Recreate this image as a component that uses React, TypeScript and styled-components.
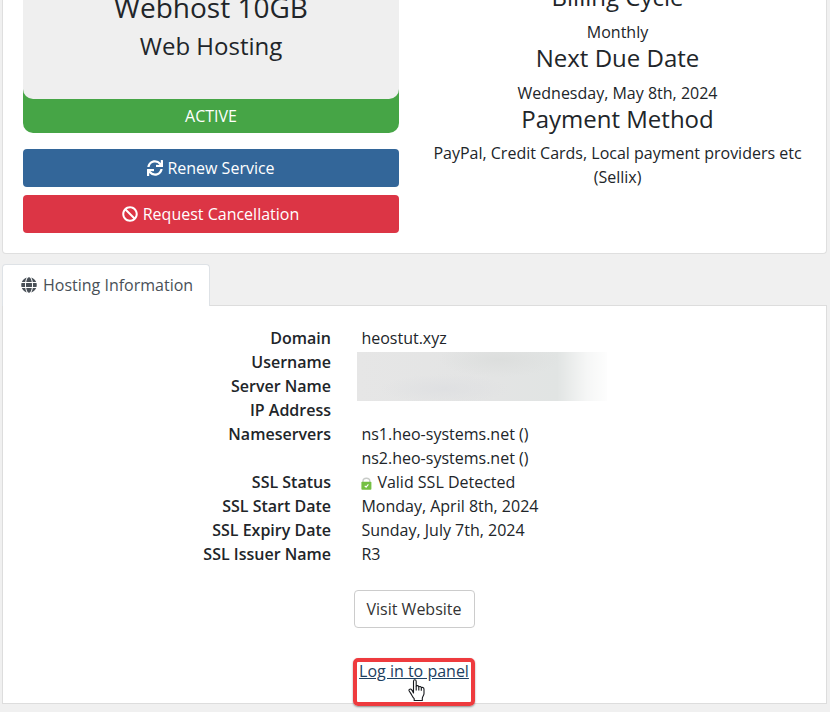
import React from "react";
import styled, { createGlobalStyle } from "styled-components";
import { FaBan, FaGlobe, FaSync } from "react-icons/fa";

const GlobalStyle = createGlobalStyle`
  *, *::before, *::after { box-sizing: border-box; }
  body {
    margin: 0;
    background: #f0f0f0;
    color: #212529;
    font-family: "Open Sans", Verdana, Tahoma, sans-serif;
    font-size: 16px;
    line-height: 24px;
  }
`;

const Page = styled.main`
  width: 830px;
  height: 712px;
  padding: 0 3px 0 2px;
  overflow: hidden;
`;

const SummaryCard = styled.section`
  display: grid;
  grid-template-columns: 376px 377px;
  column-gap: 30px;
  height: 254px;
  padding: 0 20px;
  background: #fff;
  border: 1px solid #dfdfdf;
  border-top: 0;
  border-radius: 0 0 4px 4px;
`;

const ProductColumn = styled.div`
  display: flex;
  flex-direction: column;
`;

const StatusBox = styled.div`
  height: 133px;
  margin-bottom: 16px;
  background: #46a546;
  border-radius: 0 0 10px 10px;
  color: #fff;
  text-align: center;
  text-transform: uppercase;
`;

const ProductBox = styled.div`
  display: flow-root;
  height: 99px;
  margin-bottom: 5px;
  background: #efefef;
  border-radius: 0 0 10px 10px;
  color: #212529;
  text-transform: none;
`;

const ProductName = styled.h3`
  margin: -9.4px 0 8px;
  font-size: 28px;
  font-weight: 400;
  line-height: 33.6px;
`;

const Heading = styled.h4`
  margin: 0 0 8px;
  font-size: 24px;
  font-weight: 400;
  line-height: 28.8px;
`;

const ActionButton = styled.button<{ $color: string }>`
  display: flex;
  align-items: center;
  justify-content: center;
  gap: 4.5px;
  height: 38px;
  margin: 0 0 8px;
  padding: 0 0.5px 0 0;
  border: 0;
  border-radius: 4px;
  background: ${(p) => p.$color};
  color: #fff;
  font: inherit;
`;

const BillingColumn = styled.div`
  margin-top: -17px;
  text-align: center;
`;

const TabBar = styled.nav`
  display: flex;
  margin-top: 10px;
  height: 41px;
`;

const Tab = styled.a`
  display: flex;
  align-items: center;
  gap: 6px;
  height: 42px;
  width: 208px;
  padding: 0 0 2px 18px;
  background: #fff;
  border: 1px solid #dee2e6;
  border-bottom: 0;
  border-radius: 4px 4px 0 0;
  color: #495057;
  z-index: 1;
`;

const Panel = styled.section`
  display: flex;
  flex-direction: column;
  align-items: center;
  height: 399px;
  padding-top: 20px;
  background: #fff;
  border: 1px solid #ddd;
`;

const Details = styled.dl`
  align-self: stretch;
  display: grid;
  grid-template-columns: 328px 1fr;
  grid-auto-rows: 24px;
  column-gap: 30.4px;
  margin: 0 0 24px;
`;

const Label = styled.dt<{ $row: number }>`
  grid-column: 1;
  grid-row: ${(p) => p.$row};
  font-weight: 600;
  text-align: right;
`;

const Value = styled.dd<{ $row: number }>`
  grid-column: 2;
  grid-row: ${(p) => p.$row};
  margin: 0;
`;

const Redacted = styled.dd`
  grid-column: 2;
  grid-row: 2 / span 2;
  width: 250px;
  height: 49px;
  margin: 2px 0 0 -4.4px;
  background:
    linear-gradient(90deg, #fff0 80%, #ffffffb0 92%, #fffffff0 100%),
    radial-gradient(ellipse at 57% 15%, #dcdedd, #dcdedd00 30%),
    radial-gradient(ellipse at 35% 75%, #dfe0e2, #dfe0e200 28%),
    linear-gradient(90deg, #e6e6e6, #e3e4e4 55%, #e1e4e3 80%);
`;

const LockIcon = styled.svg`
  margin-right: 5px;
  vertical-align: -2px;
`;

const VisitButton = styled.button`
  width: 121px;
  height: 38px;
  margin: 0 0 30px;
  padding: 0 1px 0 0;
  border: 1px solid #ccc;
  border-radius: 4px;
  background: #fff;
  color: #333;
  font: inherit;
`;

const LoginArea = styled.div`
  position: relative;
  display: flex;
  justify-content: center;
  width: 121px;
  padding: 1px 1px 0 0;
`;

const LoginLink = styled.a`
  color: #1d4061;
  text-decoration: underline;
`;

const Highlight = styled.span`
  position: absolute;
  top: 0;
  left: -1px;
  width: 122px;
  height: 48px;
  border: 4px solid #ee3b3e;
  border-radius: 5px;
  box-shadow: 0 1px 2px #0006;
`;

const Pointer = styled.svg`
  position: absolute;
  left: 54px;
  top: 21px;
`;

const details: [string, string][] = [
  ["Domain", "heostut.xyz"],
  ["Username", ""],
  ["Server Name", ""],
  ["IP Address", ""],
  ["Nameservers", "ns1.heo-systems.net ()"],
  ["", "ns2.heo-systems.net ()"],
  ["SSL Status", "Valid SSL Detected"],
  ["SSL Start Date", "Monday, April 8th, 2024"],
  ["SSL Expiry Date", "Sunday, July 7th, 2024"],
  ["SSL Issuer Name", "R3"],
];

function Lock() {
  return (
    <LockIcon width="11" height="13" viewBox="0 0 11 13" aria-hidden="true">
      <path d="M2 6V4.2a3.4 3 0 0 1 6.8 0V6" fill="none" stroke="#c8cbc8" strokeWidth="1.4" />
      <rect x=".4" y="4.7" width="10" height="8" rx=".8" fill="#75c044" />
      <path d="m3.7 8.8 1.4 1.3 2.3-2.7" fill="none" stroke="#fff" strokeWidth="1.1" />
    </LockIcon>
  );
}

function HandPointer() {
  return (
    <Pointer width="18" height="23" viewBox="0 0 18 23" aria-hidden="true">
      <path
        d="M5.5 14V2.5C5.5 1.3 6 .8 6.8.8s1.4.5 1.4 1.7V7c.4-.6 2.2-.6 2.6.8.6-.6 2.3-.4 2.5.9.7-.6 2.7-.3 2.7 1.5v4.3c0 2-1.7 3-1.7 5v2H6.2v-1.8c-1.4-1.2-2.3-3.4-3.3-5.1L1.2 12c-.7-1.3.7-2.4 1.9-1.7.9.5 1.5 1.5 2.4 3.7Z"
        fill="#fff"
        stroke="#16181d"
        strokeWidth="1.1"
        strokeLinejoin="round"
      />
      <path d="M8.2 7v4.5M10.8 7.8v3.7M13.3 8.7v3" stroke="#16181d" strokeWidth="1.1" />
    </Pointer>
  );
}

export default function App() {
  return (
    <Page>
      <GlobalStyle />
      <SummaryCard>
        <ProductColumn>
          <StatusBox>
            <ProductBox>
              <ProductName>Webhost 10GB</ProductName>
              <Heading>Web Hosting</Heading>
            </ProductBox>
            Active
          </StatusBox>
          <ActionButton $color="#336699"><FaSync />Renew Service</ActionButton>
          <ActionButton $color="#dc3545"><FaBan />Request Cancellation</ActionButton>
        </ProductColumn>
        <BillingColumn>
          <Heading>Billing Cycle</Heading>
          Monthly
          <Heading>Next Due Date</Heading>
          Wednesday, May 8th, 2024
          <Heading>Payment Method</Heading>
          PayPal, Credit Cards, Local payment providers etc (Sellix)
        </BillingColumn>
      </SummaryCard>
      <TabBar>
        <Tab><FaGlobe />Hosting Information</Tab>
      </TabBar>
      <Panel>
        <Details>
          {details.map(([label, value], index) => (
            <React.Fragment key={index}>
              {label && <Label $row={index + 1}>{label}</Label>}
              {value && (
                <Value $row={index + 1}>
                  {label === "SSL Status" && <Lock />}
                  {value}
                </Value>
              )}
            </React.Fragment>
          ))}
          <Redacted aria-label="Hidden" />
        </Details>
        <VisitButton>Visit Website</VisitButton>
        <LoginArea>
          <LoginLink>Log in to panel</LoginLink>
          <Highlight />
          <HandPointer />
        </LoginArea>
      </Panel>
    </Page>
  );
}
